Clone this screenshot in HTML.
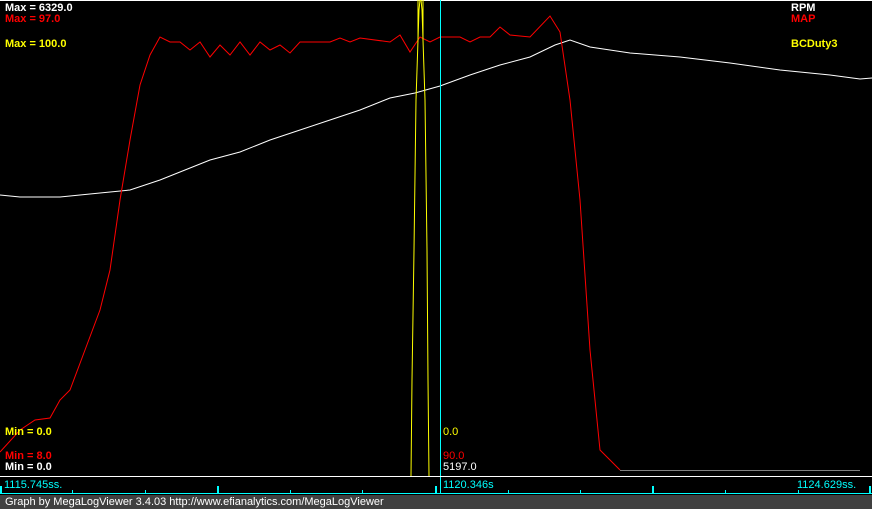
<!DOCTYPE html><html><head><style>
body{margin:0;width:872px;height:509px;background:#000;overflow:hidden;position:relative;font-family:"Liberation Sans",sans-serif}
.t{position:absolute;font-size:11px;font-weight:bold;line-height:12px;white-space:nowrap}
.n{position:absolute;font-size:11px;line-height:12px;white-space:nowrap}
</style></head><body>
<svg width="872" height="509" style="position:absolute;left:0;top:0">
<line x1="0" y1="0.5" x2="872" y2="0.5" stroke="#fff"/>
<polyline fill="none" stroke="#fff" stroke-width="1" points="0,195 20,197 40,197 60,197 80,195 100,193 130,190 160,180 190,168 210,160 240,152 270,140 300,130 330,120 360,110 390,98 415,93 440,86 470,75 500,65 530,57 555,45 570,40 590,47 630,53 680,57 730,63 780,70 830,75 860,79 872,78"/>
<polyline fill="none" stroke="#f00" stroke-width="1" points="0,452 20,430 35,420 50,418 60,400 70,390 85,350 100,310 110,270 120,200 130,140 140,85 150,55 160,37 170,42 180,42 190,50 200,42 210,57 220,45 230,55 240,42 250,55 260,42 270,50 280,45 290,53 300,42 330,42 340,38 350,42 360,38 390,42 400,35 410,52 420,37 430,42 440,37 460,37 470,42 480,37 490,37 500,27 510,35 530,37 550,16 560,32 570,100 580,200 590,350 600,450 620,470"/>
<line x1="620" y1="470.5" x2="860" y2="470.5" stroke="#808080"/>
<polyline fill="none" stroke="#ff0" points="411,476 412,380 414,250 416,100 419,10 420,0"/>
<polyline fill="none" stroke="#ff0" points="421,0 422,10 425,100 427,250 428,380 429,476"/>
<polyline fill="none" stroke="#ff0" points="418,0 418,40"/>
<polyline fill="none" stroke="#ff0" points="423,0 423,40"/>
<line x1="440.5" y1="0" x2="440.5" y2="494" stroke="#0ff"/>
<line x1="0" y1="476.5" x2="872" y2="476.5" stroke="#fff"/>
<line x1="0" y1="493.5" x2="872" y2="493.5" stroke="#0ff"/>
<g stroke="#0ff" stroke-width="2">
<line x1="1" y1="486" x2="1" y2="494"/><line x1="218" y1="486" x2="218" y2="494"/><line x1="436" y1="486" x2="436" y2="494"/><line x1="653" y1="486" x2="653" y2="494"/><line x1="870" y1="486" x2="870" y2="494"/>
</g>
<g stroke="#0ff" stroke-width="1">
<line x1="72.5" y1="490" x2="72.5" y2="494"/><line x1="145.5" y1="490" x2="145.5" y2="494"/><line x1="290.5" y1="490" x2="290.5" y2="494"/><line x1="362.5" y1="490" x2="362.5" y2="494"/><line x1="508.5" y1="490" x2="508.5" y2="494"/><line x1="580.5" y1="490" x2="580.5" y2="494"/><line x1="725.5" y1="490" x2="725.5" y2="494"/><line x1="798.5" y1="490" x2="798.5" y2="494"/>
</g>
<rect x="0" y="495" width="872" height="14" fill="#404040"/>
</svg>
<div class="t" style="left:5px;top:2px;color:#fff">Max = 6329.0</div>
<div class="t" style="left:5px;top:13px;color:#f00">Max = 97.0</div>
<div class="t" style="left:5px;top:38px;color:#ff0">Max = 100.0</div>
<div class="t" style="left:791px;top:2px;color:#fff">RPM</div>
<div class="t" style="left:791px;top:13px;color:#f00">MAP</div>
<div class="t" style="left:791px;top:38px;color:#ff0">BCDuty3</div>
<div class="t" style="left:5px;top:426px;color:#ff0">Min = 0.0</div>
<div class="t" style="left:5px;top:450px;color:#f00">Min = 8.0</div>
<div class="t" style="left:5px;top:461px;color:#fff">Min = 0.0</div>
<div class="n" style="left:443px;top:426px;color:#ff0">0.0</div>
<div class="n" style="left:443px;top:450px;color:#f00">90.0</div>
<div class="n" style="left:443px;top:461px;color:#fff">5197.0</div>
<div class="n" style="left:4px;top:479px;color:#0ff">1115.745ss.</div>
<div class="n" style="left:443px;top:479px;color:#0ff">1120.346s</div>
<div class="n" style="left:797px;top:479px;color:#0ff">1124.629ss.</div>
<div class="n" style="left:5px;top:496px;color:#fff">Graph by MegaLogViewer 3.4.03 http://www.efianalytics.com/MegaLogViewer</div>
</body></html>
